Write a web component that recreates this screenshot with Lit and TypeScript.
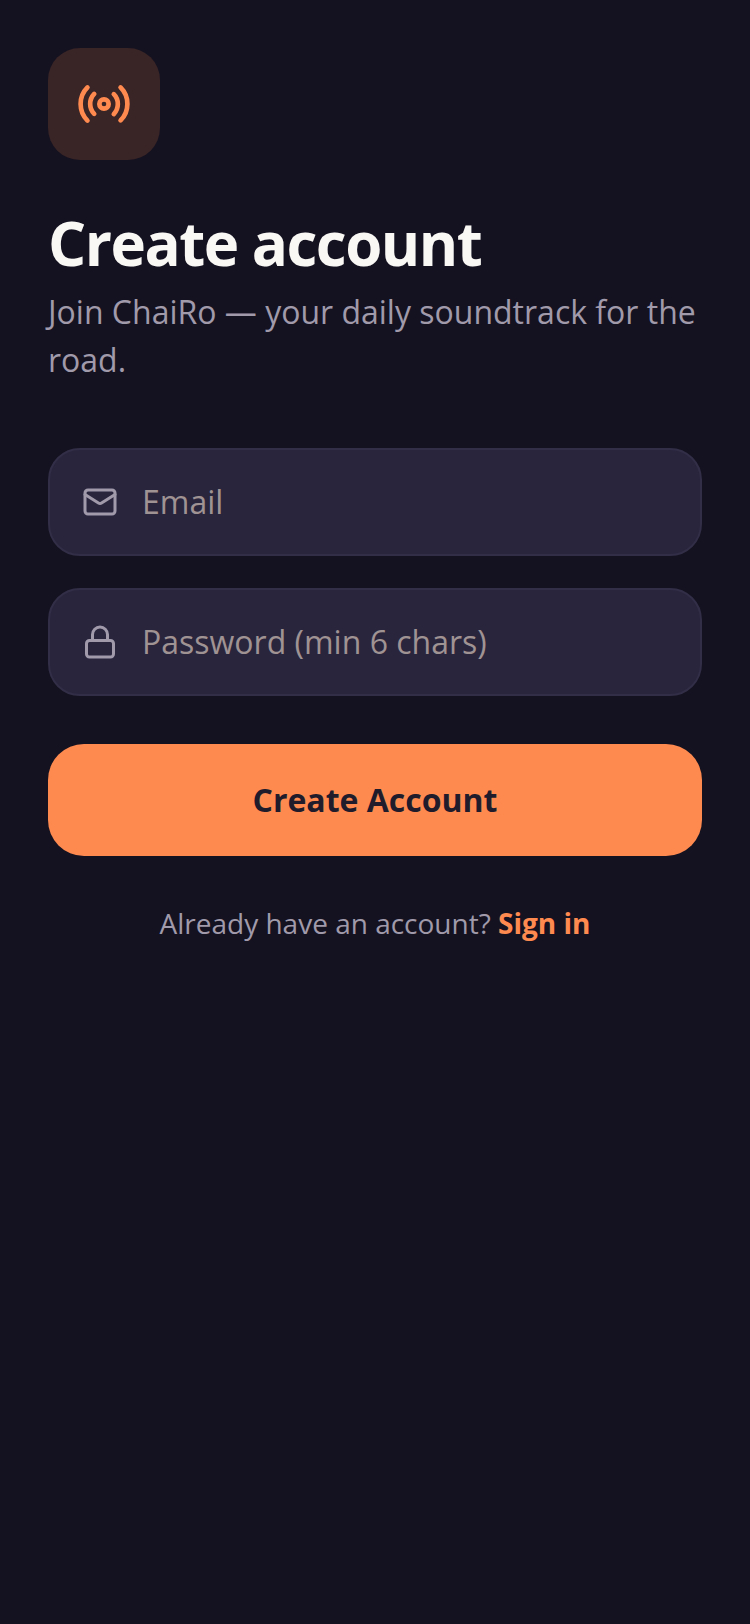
import { LitElement, html, css } from 'lit';
import { customElement } from 'lit/decorators.js';

@customElement('app-root')
export class AppRoot extends LitElement {
  static styles = css`
    :host {
      display: block;
      min-height: 1624px;
      background: #141220;
      font-family: 'Open Sans', sans-serif;
    }
    .page {
      display: flex;
      flex-direction: column;
      padding: 48px;
    }
    .logo {
      width: 112px;
      height: 112px;
      border-radius: 32px;
      background: #392426;
      display: flex;
      align-items: center;
      justify-content: center;
      color: #ff8a50;
    }
    .logo svg {
      width: 56px;
      height: 56px;
    }
    h1 {
      margin: 43px 0 5px;
      font-size: 60px;
      line-height: 80px;
      font-weight: 700;
      letter-spacing: -1.5px;
      color: #faf8f5;
    }
    .sub {
      margin: 0 0 64px;
      font-size: 32px;
      line-height: 48px;
      color: #a09aab;
    }
    .field {
      display: flex;
      align-items: center;
      gap: 24px;
      height: 108px;
      box-sizing: border-box;
      padding: 0 32px;
      margin-bottom: 32px;
      background: #29253d;
      border: 2px solid #322e47;
      border-radius: 32px;
      color: #a09aab;
    }
    .field svg {
      width: 36px;
      height: 36px;
      flex: none;
    }
    input {
      flex: 1;
      min-width: 0;
      border: none;
      outline: none;
      padding: 0 0 2px;
      background: transparent;
      font: 400 32px 'Open Sans', sans-serif;
      color: #faf8f5;
    }
    input::placeholder {
      color: #a09393;
      opacity: 1;
    }
    button {
      height: 112px;
      margin-top: 16px;
      padding: 0 0 2px;
      border: none;
      border-radius: 36px;
      background: #ff8a50;
      color: #211c2c;
      font: 700 32px 'Open Sans', sans-serif;
    }
    .foot {
      margin: 47px 0 0;
      text-align: center;
      font-size: 28px;
      line-height: 40px;
      color: #a09aab;
    }
    .foot a {
      color: #ff8a50;
      font-weight: 700;
      text-decoration: none;
    }
  `;

  render() {
    return html`
      <div class="page">
        <div class="logo">
          <svg viewBox="0 0 24 24" fill="none" stroke="currentColor" stroke-width="2" stroke-linecap="round" stroke-linejoin="round">
            <path d="M4.9 19.1C1 15.2 1 8.8 4.9 4.9" />
            <path d="M7.8 16.2c-2.3-2.3-2.3-6.1 0-8.5" />
            <circle cx="12" cy="12" r="2" />
            <path d="M16.2 7.8c2.3 2.3 2.3 6.1 0 8.5" />
            <path d="M19.1 4.9C23 8.8 23 15.1 19.1 19" />
          </svg>
        </div>
        <h1>Create account</h1>
        <p class="sub">Join ChaiRo — your daily soundtrack for the road.</p>
        <label class="field">
          <svg viewBox="0 0 24 24" fill="none" stroke="currentColor" stroke-width="2" stroke-linecap="round" stroke-linejoin="round">
            <rect x="2" y="4" width="20" height="16" rx="2" />
            <path d="m22 7-8.97 5.7a1.94 1.94 0 0 1-2.06 0L2 7" />
          </svg>
          <input type="email" placeholder="Email" />
        </label>
        <label class="field">
          <svg viewBox="0 0 24 24" fill="none" stroke="currentColor" stroke-width="2" stroke-linecap="round" stroke-linejoin="round">
            <rect x="3" y="11" width="18" height="11" rx="2" />
            <path d="M7 11V7a5 5 0 0 1 10 0v4" />
          </svg>
          <input type="password" placeholder="Password (min 6 chars)" />
        </label>
        <button>Create Account</button>
        <p class="foot">Already have an account? <a href="#">Sign in</a></p>
      </div>
    `;
  }
}
